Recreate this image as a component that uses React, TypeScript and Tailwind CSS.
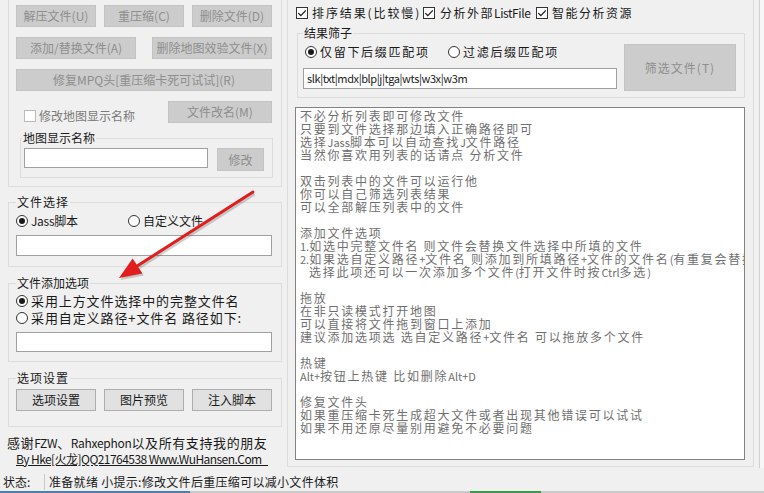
import type { ReactNode } from "react";

const FONT = "font-['Noto_Sans_CJK_SC','Microsoft_YaHei',sans-serif]";

const helpText = `不必分析列表即可修改文件
只要到文件选择那边填入正确路径即可
选择Jass脚本可以自动查找J文件路径
当然你喜欢用列表的话请点 分析文件

双击列表中的文件可以运行他
你可以自己筛选列表结果
可以全部解压列表中的文件

添加文件选项
1.如选中完整文件名 则文件会替换文件选择中所填的文件
2.如果选自定义路径+文件名 则添加到所填路径+文件的文件名(有重复会替换)
  选择此项还可以一次添加多个文件(打开文件时按Ctrl多选)

拖放
在非只读模式打开地图
可以直接将文件拖到窗口上添加
建议添加选项选 选自定义路径+文件名 可以拖放多个文件

热键
Alt+按钮上热键 比如删除Alt+D

修复文件头
如果重压缩卡死生成超大文件或者出现其他错误可以试试
如果不用还原尽量别用避免不必要问题`;

// latin runs are drawn narrower than the spaced-out CJK text
function mix(text: string, latinClass: string) {
  return text.split(/([!-~]+)/).map((part, i) =>
    i % 2 === 1 ? (
      <span key={i} className={latinClass}>
        {part}
      </span>
    ) : (
      part
    )
  );
}

function Btn({
  children,
  className = "",
  disabled = false,
}: {
  children: ReactNode;
  className?: string;
  disabled?: boolean;
}) {
  return (
    <div
      className={
        (disabled
          ? "bg-[#cccccc] border-[#c4c4c4] text-[#8e8e8e] "
          : "bg-[#e1e1e1] border-[#adadad] text-[#1a1a1a] ") +
        "flex shrink-0 items-center justify-center border text-[12px] leading-none " +
        className
      }
    >
      {children}
    </div>
  );
}

function Radio({ checked = false }: { checked?: boolean }) {
  return (
    <span className="flex h-[12px] w-[12px] shrink-0 items-center justify-center rounded-full border border-[#333333] bg-white">
      {checked && <span className="h-[6px] w-[6px] rounded-full bg-[#1a1a1a]" />}
    </span>
  );
}

function Check({ checked = false, disabled = false }: { checked?: boolean; disabled?: boolean }) {
  return (
    <svg width="12" height="12" viewBox="0 0 12 12" className="shrink-0">
      <rect
        x="0.5"
        y="0.5"
        width="11"
        height="11"
        fill="#ffffff"
        stroke={disabled ? "#bcbcbc" : "#333333"}
      />
      {checked && (
        <path d="M2.3 6.1 L4.8 8.6 L9.8 3.4" fill="none" stroke="#1a1a1a" strokeWidth="1.3" />
      )}
    </svg>
  );
}

function Input({ className = "", value = "" }: { className?: string; value?: string }) {
  return (
    <div
      className={
        "flex shrink-0 items-center overflow-hidden border border-[#a0a0a0] bg-white pl-[3px] text-[11px] tracking-[-0.4px] text-[#1a1a1a] " +
        className
      }
    >
      {value}
    </div>
  );
}

function LeftColumn() {
  return (
    <div className="flex w-[287px] shrink-0 flex-col pl-[8px]">
      {/* top tool group */}
      <div className="h-[187px] w-[274px] border-x border-b border-[#dcdcdc] pl-[7px] pt-[5px]">
        <div className="flex gap-[8px]">
          <Btn disabled className="h-[22px] w-[80px]">解压文件(U)</Btn>
          <Btn disabled className="h-[22px] w-[80px]">重压缩(C)</Btn>
          <Btn disabled className="h-[22px] w-[80px]">删除文件(D)</Btn>
        </div>
        <div className="mt-[10px] flex w-[256px] justify-between">
          <Btn disabled className="h-[22px] w-[120px]">添加/替换文件(A)</Btn>
          <Btn disabled className="h-[22px] w-[120px]">删除地图效验文件(X)</Btn>
        </div>
        <Btn disabled className="mt-[10px] h-[22px] w-[256px]">
          修复MPQ头[重压缩卡死可试试](R)
        </Btn>
        <div className="mt-[10px] flex w-[256px] items-start justify-between">
          <div className="ml-[8px] mt-[8px] flex items-center gap-[3px] text-[12px] leading-[14px] text-[#7a7a7a]">
            <Check disabled />
            <span>修改地图显示名称</span>
          </div>
          <Btn disabled className="h-[22px] w-[104px]">文件改名(M)</Btn>
        </div>
        <fieldset className="ml-[4px] mt-[8px] w-[253px] border border-[#dcdcdc]">
          <legend className="ml-[1px] px-[1px] text-[12px] leading-[14px]">地图显示名称</legend>
          <div className="flex items-start pb-[6px] pl-[3px] pt-[3px]">
            <Input className="h-[20px] w-[184px]" />
            <Btn disabled className="ml-[9px] h-[23px] w-[47px]">修改</Btn>
          </div>
        </fieldset>
      </div>

      {/* 文件选择 */}
      <fieldset className="mt-[8px] w-[274px] border border-[#dcdcdc]">
        <legend className="ml-[7px] px-[1px] text-[12px] leading-[14px] tracking-[1px]">文件选择</legend>
        <div className="pb-[10px] pl-[7px]">
          <div className="mt-[5px] flex h-[14px] items-center text-[12px] leading-[14px]">
            <div className="flex w-[112px] items-center gap-[3px]">
              <Radio checked />
              <span className="tracking-[-0.3px]">Jass脚本</span>
            </div>
            <div className="flex items-center gap-[3px]">
              <Radio />
              <span>自定义文件</span>
            </div>
          </div>
          <Input className="mt-[7px] h-[21px] w-[256px]" />
        </div>
      </fieldset>

      {/* 文件添加选项 */}
      <fieldset className="mt-[9px] w-[274px] border border-[#dcdcdc]">
        <legend className="ml-[7px] px-[1px] text-[12px] leading-[14px]">文件添加选项</legend>
        <div className="pb-[9px] pl-[7px]">
          <div className="mt-[2px] flex h-[17px] items-center gap-[3px] text-[13px] leading-[17px] tracking-[0.9px]">
            <Radio checked />
            <span>采用上方文件选择中的完整文件名</span>
          </div>
          <div className="flex h-[17px] items-center gap-[3px] text-[13px] leading-[17px] tracking-[0.9px]">
            <Radio />
            <span>采用自定义路径+文件名 路径如下:</span>
          </div>
          <Input className="mt-[6px] h-[20px] w-[256px]" />
        </div>
      </fieldset>

      {/* 选项设置 */}
      <fieldset className="mt-[9px] w-[274px] border border-[#dcdcdc]">
        <legend className="ml-[7px] px-[1px] text-[12px] leading-[14px] tracking-[1px]">选项设置</legend>
        <div className="mt-[4px] flex gap-[8px] pb-[15px] pl-[7px]">
          <Btn className="h-[22px] w-[80px]">选项设置</Btn>
          <Btn className="h-[22px] w-[80px]">图片预览</Btn>
          <Btn className="h-[22px] w-[80px]">注入脚本</Btn>
        </div>
      </fieldset>

      <div className="-ml-[1px] mt-[8px] whitespace-nowrap text-[13px] leading-[16px] tracking-[0.6px]">
        {mix("感谢FZW、Rahxephon以及所有支持我的朋友", "text-[12px] tracking-[-0.3px]")}
      </div>
      <div className="ml-[8px] mt-[1px] w-[254px] whitespace-pre text-[12px] leading-[14px] tracking-[-0.55px] underline underline-offset-[1px]">
        {"By Hke[火龙]QQ21764538 Www.WuHansen.Com   "}
      </div>
    </div>
  );
}

function RightColumn() {
  return (
    <div className="flex h-[467px] w-[467px] shrink-0 flex-col border-x border-b border-[#dcdcdc]">
      <div className="mt-[4px] flex h-[18px] items-center pl-[8px] text-[12px] leading-[18px] tracking-[1.5px]">
        <div className="flex w-[127px] items-center gap-[4px]">
          <Check checked />
          <span className="tracking-[1.9px]">排序结果(比较慢)</span>
        </div>
        <div className="flex w-[113px] items-center gap-[5px]">
          <Check checked />
          <span>
            分析外部<span className="tracking-[-0.4px]">ListFile</span>
          </span>
        </div>
        <div className="flex items-center gap-[4px]">
          <Check checked />
          <span>智能分析资源</span>
        </div>
      </div>

      <fieldset className="ml-[9px] mt-[4px] w-[448px] border border-[#dcdcdc]">
        <legend className="ml-[5px] px-[1px] text-[12px] leading-[14px]">结果筛子</legend>
        <div className="flex items-start pb-[6px] pl-[5px]">
          <div>
            <div className="mt-[5px] flex h-[14px] items-center pl-[2px] text-[12px] leading-[14px] tracking-[1.7px]">
              <div className="flex w-[143px] items-center gap-[3px]">
                <Radio checked />
                <span>仅留下后缀匹配项</span>
              </div>
              <div className="flex items-center gap-[3px]">
                <Radio />
                <span>过滤后缀匹配项</span>
              </div>
            </div>
            <Input className="mt-[9px] h-[21px] w-[314px]" value="slk|txt|mdx|blp|j|tga|wts|w3x|w3m" />
          </div>
          <Btn disabled className="ml-[7px] mt-[4px] h-[47px] w-[112px] tracking-[1px]">
            筛选文件(T)
          </Btn>
        </div>
      </fieldset>

      <div className="ml-[7px] mt-[9px] h-[353px] w-[450px] overflow-hidden whitespace-pre border border-[#828282] bg-white pl-[4px] pt-[1px] text-[12px] leading-[13px] tracking-[1.75px] text-[#6f6f6f]">
        {helpText.split("\n").map((line, i) => (
          <div key={i} className="h-[13px]">
            {mix(line, "text-[11px] tracking-[0px]")}
          </div>
        ))}
      </div>
    </div>
  );
}

function StatusBar() {
  return (
    <div className="flex flex-col">
      <div className="flex h-[23px] items-center pt-[5px] text-[12px] leading-[14px]">
        <span className="w-[44px] pl-[3px]">状态:</span>
        <span className="h-[16px] border-l border-[#c8c8c8]" />
        <span className="pl-[4px] tracking-[0.3px]">准备就绪 小提示:修改文件后重压缩可以减小文件体积</span>
      </div>
      <div className="flex h-[2px]">
        <div className="w-[190px] bg-[#4f7eae]" />
        <div className="w-[280px] bg-[#c9c9c9]" />
        <div className="w-[71px] bg-[#3c9a4c]" />
        <div className="flex-1 bg-[#c9c9c9]" />
      </div>
    </div>
  );
}

function Arrow() {
  return (
    <svg
      className="pointer-events-none absolute left-0 top-0"
      width="764"
      height="493"
      viewBox="0 0 764 493"
    >
      <g opacity="0.25" transform="translate(1.5 2)">
        <line x1="253" y1="192" x2="134" y2="268" stroke="#444" strokeWidth="3" />
        <polygon points="119,278 132.6,258.4 142.4,273.6" fill="#444" />
      </g>
      <line x1="253" y1="192" x2="134" y2="268" stroke="#e01e1e" strokeWidth="3" strokeLinecap="round" />
      <polygon points="119,278 132.6,258.4 142.4,273.6" fill="#e01e1e" />
    </svg>
  );
}

export default function App() {
  return (
    <div
      className={`${FONT} relative flex h-[493px] w-[764px] flex-col overflow-hidden bg-[#f0f0f0] text-[#1a1a1a]`}
    >
      <div className="flex h-[468px] shrink-0">
        <LeftColumn />
        <RightColumn />
        <div className="ml-[5px] w-[5px] border-l border-[#cfcfcf] bg-[#f7f7f7]" />
      </div>
      <StatusBar />
      <Arrow />
    </div>
  );
}
